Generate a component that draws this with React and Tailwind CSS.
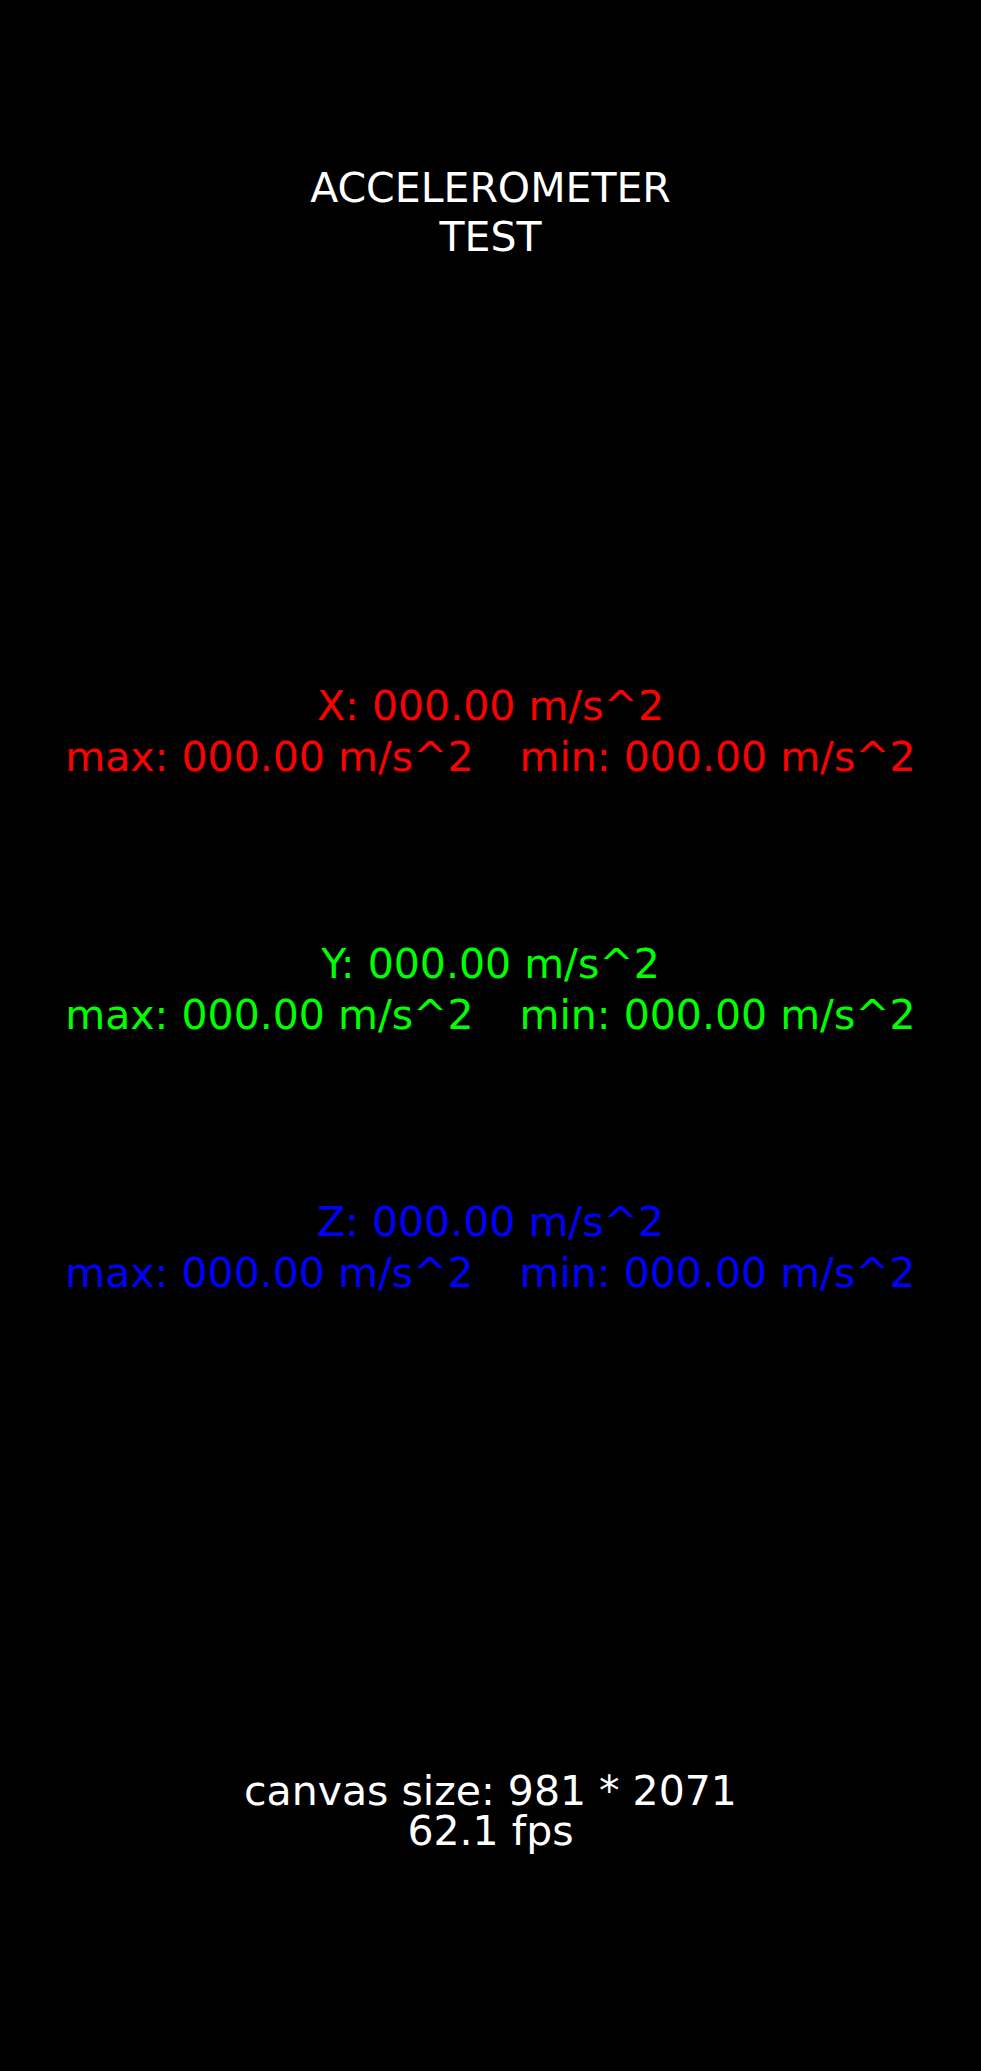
import React from "react";

const axes = [
  { label: "X", color: "text-[#ff0000]" },
  { label: "Y", color: "text-[#00ff00]" },
  { label: "Z", color: "text-[#0000ff]" },
];

function AxisBlock({ label, color }) {
  return (
    <div className={`flex flex-col items-center leading-[51px] ${color}`}>
      <div>{label}: 000.00 m/s^2</div>
      <div className="flex gap-[46px]">
        <span>max: 000.00 m/s^2</span>
        <span>min: 000.00 m/s^2</span>
      </div>
    </div>
  );
}

export default function App() {
  return (
    <div className="w-[981px] h-[2071px] bg-black text-white text-[41px] font-['DejaVu_Sans',Verdana,sans-serif] flex flex-col items-center whitespace-nowrap overflow-hidden">
      {/* title */}
      <div className="mt-[164px] flex flex-col items-center leading-[49px]">
        <div>ACCELEROMETER</div>
        <div>TEST</div>
      </div>

      {/* axis readouts */}
      <div className="mt-[419px] flex flex-col items-center gap-[156px]">
        {axes.map((a) => (
          <AxisBlock key={a.label} label={a.label} color={a.color} />
        ))}
      </div>

      {/* footer stats */}
      <div className="mt-[472px] flex flex-col items-center leading-[40px]">
        <div>canvas size: 981 * 2071</div>
        <div>62.1 fps</div>
      </div>
    </div>
  );
}
